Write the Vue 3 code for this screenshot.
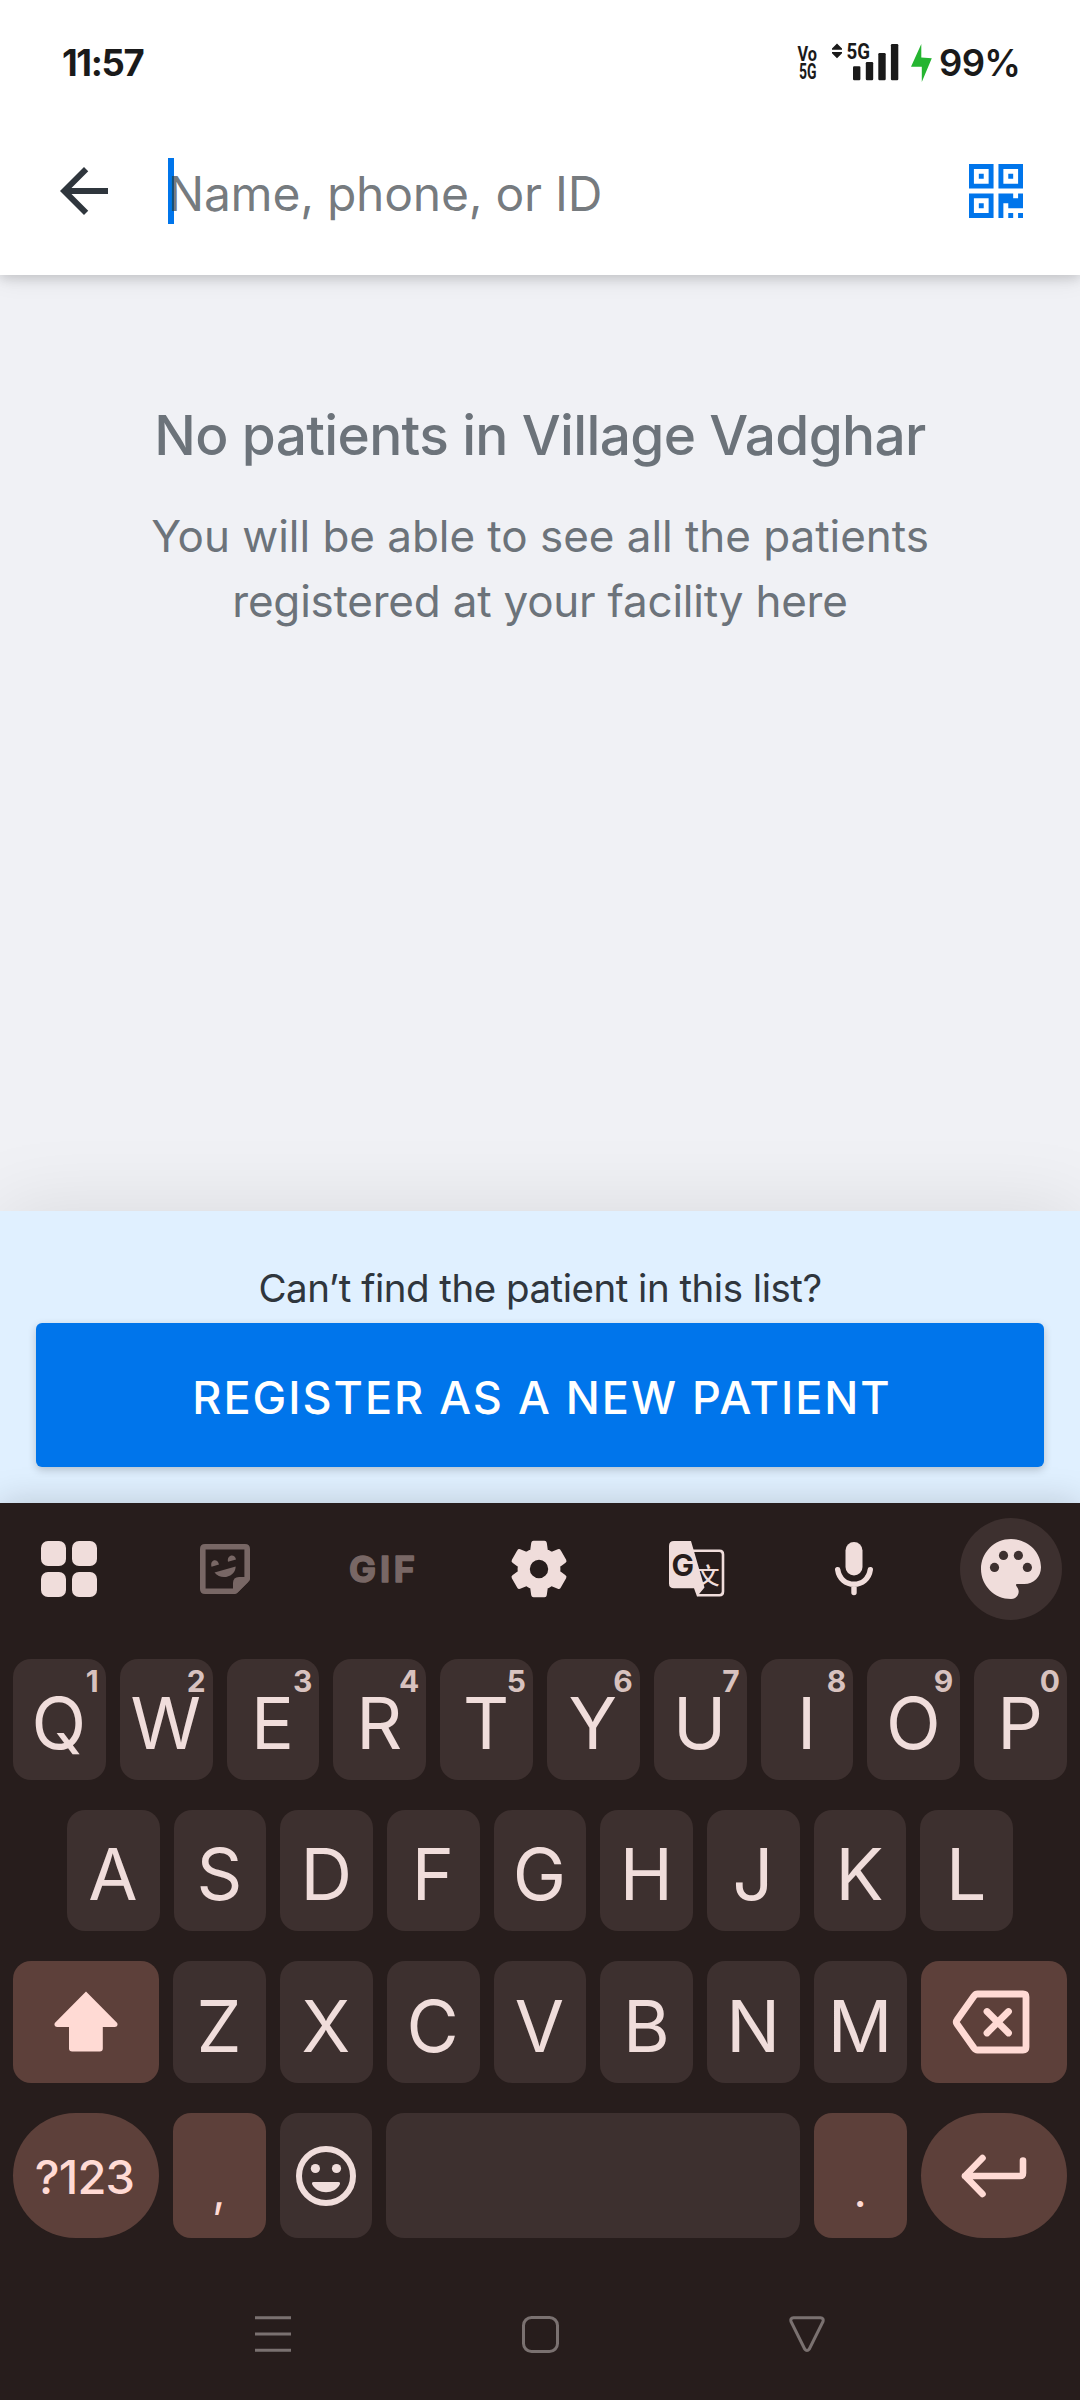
<script setup>
const topRow = [...'QWERTYUIOP'].map((letter, i) => ({ letter, digit: (i + 1) % 10 }))
const homeRow = [...'ASDFGHJKL']
const bottomRow = [...'ZXCVBNM']
</script>

<template>
  <div class="screen">
    <header class="header">
      <div class="status">
        <span class="clock">11:57</span>
        <div class="indicators">
          <svg class="network" width="110" height="60" viewBox="794 33 110 60">
            <g class="net-text">
              <text x="797.5" y="61" font-size="20" textLength="19.5" lengthAdjust="spacingAndGlyphs">Vo</text>
              <text x="799" y="78.7" font-size="21.5" textLength="17.5" lengthAdjust="spacingAndGlyphs">5G</text>
              <text x="846.5" y="59" font-size="22" textLength="23.5" lengthAdjust="spacingAndGlyphs">5G</text>
            </g>
            <path class="ink" d="M837 43.5l5 5v1.3h-10v-1.3zM837 58.3l5-5V52h-10v1.3z" />
            <rect class="ink" x="853" y="66.3" width="7.4" height="13.9" rx="1.2" />
            <rect class="ink" x="865.8" y="62" width="7.4" height="18.2" rx="1.2" />
            <rect class="ink" x="878.3" y="53" width="7.4" height="27.2" rx="1.2" />
            <rect class="ink" x="890.9" y="44" width="7.4" height="36.2" rx="1.2" />
          </svg>
          <svg class="bolt" width="21" height="38" viewBox="0 0 21 38">
            <path d="M10.3 0V13.5L20.8 14.3L10.8 38V22.7H0z" />
          </svg>
          <span class="battery">99%</span>
        </div>
      </div>
      <div class="appbar">
        <svg class="back" width="72" height="72" viewBox="0 0 24 24">
          <path d="M20 11H7.83l5.59-5.59L12 4l-8 8 8 8 1.41-1.41L7.83 13H20v-2z" />
        </svg>
        <div class="search">
          <span class="cursor"></span>
          <span class="placeholder">Name, phone, or ID</span>
        </div>
        <svg class="qr" width="54" height="54" viewBox="0 0 11 11">
          <path fill-rule="evenodd" d="M0 0h5v5H0zM1 1v3h3V1zM2 2h1v1H2zM6 0h5v5H6zM7 1v3h3V1zM8 2h1v1H8zM0 6h5v5H0zM1 7v3h3V7zM2 8h1v1H2z" />
          <path d="M6 6h3v1h1V6h1v3H8V8H7v3H6zM8 10h1v1H8zM10 10h1v1h-1z" />
        </svg>
      </div>
    </header>

    <main class="empty">
      <h1>No patients in Village Vadghar</h1>
      <p>You will be able to see all the patients</p>
      <p class="second">registered at your facility here</p>
    </main>

    <section class="register">
      <p>Can’t find the patient in this list?</p>
      <button type="button"><span>REGISTER AS A NEW PATIENT</span></button>
    </section>

    <section class="keyboard">
      <div class="tools">
        <div class="tool first">
          <svg width="56" height="56" viewBox="0 0 56 56">
            <rect width="25" height="25" rx="7" />
            <rect x="31" width="25" height="25" rx="7" />
            <rect y="31" width="25" height="25" rx="7" />
            <rect x="31" y="31" width="25" height="25" rx="7" />
          </svg>
        </div>
        <div class="tool dim">
          <svg width="50" height="50" viewBox="0 0 50 50">
            <path class="line" stroke-width="5.6" stroke-linejoin="round" d="M5 2.8H45Q47.2 2.8 47.2 5V35L35 47.2H5Q2.8 47.2 2.8 45V5Q2.8 2.8 5 2.8z" />
            <path d="M33 49V39Q33 33 39 33H49L48 38L37.5 48.5z" />
            <path d="M11.5 22.8C9.5 15 18 14 19 20.5zM28 17.8C26.5 10.5 35 9 36 15.5z" />
            <path d="M14.5 28.5L35.7 22.5C35.5 33 21 37 14.5 28.5z" />
          </svg>
        </div>
        <div class="tool dim">
          <svg width="76" height="50" viewBox="0 0 76 50">
            <text class="gif" x="5" y="38" textLength="66" lengthAdjust="spacing">GIF</text>
          </svg>
        </div>
        <div class="tool">
          <svg class="gear" width="68" height="68" viewBox="0 0 24 24">
            <path d="M19.14 12.94c.04-.3.06-.61.06-.94 0-.32-.02-.64-.07-.94l2.03-1.58c.18-.14.23-.41.12-.61l-1.92-3.32c-.12-.22-.37-.29-.59-.22l-2.39.96c-.5-.38-1.03-.7-1.62-.94L14.4 2.81c-.04-.24-.24-.41-.48-.41h-3.84c-.24 0-.43.17-.47.41L9.25 5.35C8.66 5.59 8.12 5.92 7.63 6.29L5.24 5.33c-.22-.08-.47 0-.59.22L2.74 8.87c-.12.21-.08.47.12.61l2.03 1.58c-.05.3-.09.63-.09.94s.02.64.07.94l-2.03 1.58c-.18.14-.23.41-.12.61l1.92 3.32c.12.22.37.29.59.22l2.39-.96c.5.38 1.03.7 1.62.94l.36 2.54c.05.24.24.41.48.41h3.84c.24 0 .44-.17.47-.41l.36-2.54c.59-.24 1.13-.56 1.62-.94l2.39.96c.22.08.47 0 .59-.22l1.92-3.32c.12-.22.07-.47-.12-.61zM12 15.6c-1.98 0-3.6-1.62-3.6-3.6s1.62-3.6 3.6-3.6 3.6 1.62 3.6 3.6-1.62 3.6-3.6 3.6z" />
          </svg>
        </div>
        <div class="tool">
          <svg width="56" height="56" viewBox="0 0 56 56">
            <path d="M5 0H22L35.5 46.5L28 55.5L25 47.3H5Q0 47.3 0 42.5V5Q0 0 5 0z" />
            <path class="line" stroke-width="2.6" d="M24 9.7H50.5Q54 9.7 54 13.5V50.5Q54 54.2 50.5 54.2H28" />
            <text class="t-latin" x="2.6" y="35.2">G</text>
            <text class="t-han" x="27.5" y="42.5">文</text>
          </svg>
        </div>
        <div class="tool">
          <svg width="54" height="54" viewBox="0 0 54 54">
            <rect x="18.5" width="17" height="33.5" rx="8.5" />
            <path class="line" stroke-width="5.4" stroke-linecap="round" d="M10.7 27.7C12 37 19 42.3 27 42.3S42 37 43.3 27.7M27 42.3V50.5" />
          </svg>
        </div>
        <div class="tool round">
          <svg width="60" height="60" viewBox="0 0 60 60">
            <path d="M30 0C13.4 0 0 13.4 0 30S13.4 60 30 60C34 60 37.7 57 37.7 52.5C37.7 49 35 47.5 35 46C35 45.3 35.5 45 36.3 45H43.3C52.6 45 60 38 60 28.3C60 12 46 0 30 0z" />
            <g class="hole">
              <circle cx="13.5" cy="28.4" r="4.6" />
              <circle cx="22.5" cy="16.4" r="4.6" />
              <circle cx="37.4" cy="16.4" r="4.6" />
              <circle cx="46.4" cy="28.4" r="4.6" />
            </g>
          </svg>
        </div>
      </div>

      <div class="keys">
        <div class="row">
          <div v-for="key in topRow" :key="key.letter" class="key">
            {{ key.letter }}<sup>{{ key.digit }}</sup>
          </div>
        </div>
        <div class="row home">
          <div v-for="letter in homeRow" :key="letter" class="key">{{ letter }}</div>
        </div>
        <div class="row third">
          <div class="key accent wide">
            <svg width="66" height="62" viewBox="0 0 66 62">
              <path d="M33 .5L64.2 32Q65.5 36 62 36H49.8V57.5Q49.8 60.5 46.8 60.5H19.2Q16 60.5 16 57.5V36H4Q.5 36 1.8 32z" />
            </svg>
          </div>
          <div v-for="letter in bottomRow" :key="letter" class="key">{{ letter }}</div>
          <div class="key accent wide">
            <svg class="erase" width="78" height="64" viewBox="0 0 78 64">
              <path class="line" stroke-width="6.8" stroke-linejoin="round" stroke-linecap="round" d="M25.5 4H71Q74 4 74 7V57Q74 60 71 60H25.5Q23.5 60 22 58L5 34Q3.5 32 5 30L22 6Q23.5 4 25.5 4zM35 21.5L56.5 43M56.5 21.5L35 43" />
            </svg>
          </div>
        </div>
        <div class="row last">
          <div class="key accent wide pill symbols">?123</div>
          <div class="key accent small">,</div>
          <div class="key icon">
            <svg width="60" height="60" viewBox="0 0 60 60">
              <circle class="line" cx="30" cy="30" r="27" stroke-width="6" />
              <circle cx="19.4" cy="22.5" r="4.6" />
              <circle cx="40.5" cy="22.5" r="4.6" />
              <path d="M17.5 36H42.5Q44.5 36 44 38C39 49 21 49 16 38Q15.5 36 17.5 36z" />
            </svg>
          </div>
          <div class="key space"></div>
          <div class="key accent small">.</div>
          <div class="key accent wide pill">
            <svg width="66" height="44" viewBox="0 0 66 44">
              <path class="line" stroke-width="6.6" stroke-linecap="round" stroke-linejoin="round" d="M21.5 4L4 22L21.5 40M4 22H59Q62 22 62 19V6.5" />
            </svg>
          </div>
        </div>
      </div>

      <nav class="nav">
        <svg width="36" height="36" viewBox="0 0 36 36"><path d="M0 1.7H36M0 18H36M0 34.3H36" /></svg>
        <svg width="37" height="37" viewBox="0 0 37 37"><rect x="1.5" y="1.5" width="34" height="34" rx="8" /></svg>
        <svg width="36" height="36" viewBox="0 0 36 36"><path stroke-linejoin="round" d="M4.500 1.800H31.500Q35 2 34 5.500L20.300 33Q18 36 15.700 33L2 5.500Q1 2 4.500 1.800z" /></svg>
      </nav>
    </section>
  </div>
</template>

<style>
body {
  margin: 0;
}
</style>

<style scoped>
.screen {
  width: 1080px;
  height: 2400px;
  display: flex;
  flex-direction: column;
  overflow: hidden;
  background: #f0f1f5;
  font-family: Inter, "Liberation Sans", sans-serif;
}

svg {
  display: block;
  flex: none;
}

.header {
  height: 275px;
  background: #fff;
  box-shadow: 0 4px 10px rgba(0, 0, 0, 0.12), 0 2px 24px rgba(0, 0, 0, 0.1);
}

.status {
  height: 106px;
  padding: 19px 61px 0 62px;
  box-sizing: border-box;
  display: flex;
  align-items: center;
  justify-content: space-between;
  color: #1a1a1a;
  font-size: 36.5px;
  font-weight: 700;
}

.clock {
  letter-spacing: -1.4px;
}

.indicators {
  display: flex;
  align-items: center;
}

.net-text {
  font-family: Roboto, sans-serif;
  font-weight: 700;
  fill: #1a1a1a;
}

.ink {
  fill: #1a1a1a;
}

.bolt {
  margin-left: 7px;
  fill: #25b531;
}

.battery {
  width: 80px;
  margin-left: 7px;
  font-weight: 600;
  letter-spacing: -0.7px;
  white-space: nowrap;
}

.appbar {
  height: 169px;
  padding: 0 57px 0 48px;
  box-sizing: border-box;
  display: flex;
  align-items: center;
}

.back {
  fill: #2f363d;
}

.search {
  flex: 1;
  height: 66px;
  margin-left: 48px;
  display: flex;
  align-items: center;
}

.cursor {
  width: 6px;
  height: 66px;
  background: #0075eb;
}

.placeholder {
  margin: 7px 0 0 -6px;
  font-size: 48px;
  line-height: 60px;
  letter-spacing: -0.25px;
  color: rgba(47, 54, 61, 0.66);
}

.qr {
  fill: #0075eb;
}

.empty {
  flex: 1;
  padding-top: 125px;
  text-align: center;
  color: #6c737a;
}

.empty h1 {
  margin: 0 0 34px;
  font-size: 55px;
  line-height: 70px;
  font-weight: 500;
  letter-spacing: -0.66px;
}

.empty p {
  margin: 0;
  font-size: 44px;
  line-height: 65px;
  letter-spacing: -0.04px;
}

.empty .second {
  letter-spacing: -0.22px;
}

.register {
  height: 292px;
  padding: 57px 36px 0;
  box-sizing: border-box;
  background: #e0f0ff;
  box-shadow: 0 0 76px rgba(0, 0, 0, 0.1);
}

.register p {
  margin: 0;
  height: 55px;
  line-height: 40px;
  font-size: 38.5px;
  letter-spacing: -0.5px;
  text-align: center;
  color: #2f363d;
}

.register button {
  display: flex;
  align-items: center;
  justify-content: center;
  width: 100%;
  height: 144px;
  padding: 5px 0 0 4px;
  border: 0;
  border-radius: 6px;
  background: #0075eb;
  box-shadow: 0 3px 8px rgba(0, 0, 0, 0.2);
  color: #fff;
  font: 500 45px Inter, sans-serif;
  letter-spacing: 2px;
}

.keyboard {
  height: 897px;
  background: #271d1c;
  box-shadow: 0 0 34px rgba(0, 0, 0, 0.18);
  color: #f0dddb;
  fill: #f0dddb;
  stroke: none;
}

.line {
  fill: none;
  stroke: #f0dddb;
}

.tools {
  height: 156px;
  padding: 15px 18px 0 17px;
  box-sizing: border-box;
  display: flex;
  justify-content: space-between;
}

.tool {
  width: 102px;
  height: 102px;
  display: flex;
  align-items: center;
  justify-content: center;
}

.first svg {
  margin-left: 2px;
}

.round {
  border-radius: 50%;
  background: #3d302f;
}

.hole {
  fill: #3d302f;
}

.dim {
  padding-right: 1px;
  box-sizing: border-box;
  fill: #786765;
}

.dim .line {
  stroke: #786765;
}

.gear path {
  stroke: #f0dddb;
  stroke-width: 0.7;
  stroke-linejoin: round;
}

.gif {
  font: 700 36px Inter, sans-serif;
  stroke: #786765;
  stroke-width: 1.5px;
  stroke-linejoin: round;
}

.t-latin {
  font: 700 30px Inter, sans-serif;
  fill: #271d1c;
}

.t-han {
  font: 500 23px "Noto Sans CJK SC", sans-serif;
}

.keys {
  padding: 0 13px;
  display: flex;
  flex-direction: column;
  gap: 30px;
}

.row {
  height: 121px;
  display: flex;
  gap: 14px;
}

.home {
  padding: 0 54px;
}

.third {
  height: 122px;
}

.last {
  height: 125px;
}

.key {
  position: relative;
  flex: 1 1 0;
  display: flex;
  align-items: center;
  justify-content: center;
  box-sizing: border-box;
  padding: 7px 1px 0 0;
  border-radius: 18px;
  background: #3d302f;
  font-size: 71.5px;
  line-height: 80px;
}

.key sup {
  position: absolute;
  top: 6px;
  right: 7px;
  font-size: 30px;
  line-height: 32px;
  font-weight: 700;
  color: #d8c2bf;
}

.accent {
  padding-top: 0;
  background: #5d403a;
  color: #ffdad4;
  fill: #ffdad4;
}

.accent .line {
  stroke: #ffdad4;
}

.wide {
  flex: none;
  width: 146px;
}

.erase {
  margin-left: -6px;
}

.pill {
  border-radius: 63px;
}

.symbols {
  padding-top: 3px;
  padding-right: 3px;
  font-size: 47px;
  font-weight: 500;
  letter-spacing: -0.8px;
}

.small {
  padding-top: 28px;
  font-size: 46px;
}

.icon {
  padding-top: 0;
}

.space {
  flex: none;
  width: 414px;
}

.nav {
  padding: 78px 255px 0;
  display: flex;
  justify-content: space-between;
  fill: none;
  stroke: #7a7170;
  stroke-width: 3;
}
</style>
